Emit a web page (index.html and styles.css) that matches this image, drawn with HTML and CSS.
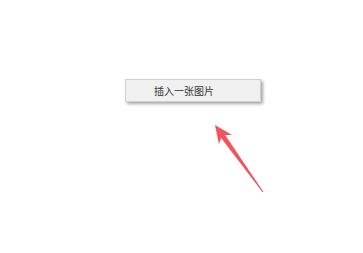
FILE: index.html
```html
<!DOCTYPE html>
<html lang="zh-CN">

<head>
  <meta charset="UTF-8">
  <meta name="viewport" content="width=device-width, initial-scale=1.0">
  <title>插入一张图片</title>
  <link rel="stylesheet" href="styles.css">
</head>

<body>
  <div class="stage">
    <div class="menu-item">插入一张图片</div>
    <!-- hint arrow pointing at the menu item -->
    <svg class="hint-arrow" width="363" height="253" viewBox="0 0 363 253">
      <polygon points="215,125 232,135 225.1,135 263.4,191.7 262.6,192.3 221.1,137.9 219,144.3" fill="#f2545b" />
    </svg>
  </div>
</body>

</html>
```

FILE: styles.css
```css
body {
  margin: 0;
  background: #fff;
  font-family: "Noto Sans CJK SC", "Liberation Sans", sans-serif;
}

.stage {
  position: relative;
  width: 363px;
  height: 253px;
  padding: 79px 0 0 125px;
  box-sizing: border-box;
}

.menu-item {
  width: 136px;
  height: 23px;
  box-sizing: border-box;
  padding-left: 28px;
  background: #f0f0f0;
  border: 1px solid #cfcfcf;
  box-shadow: 2px 2px 3px rgba(0, 0, 0, 0.35);
  font-size: 10px;
  line-height: 21px;
  color: #333;
}

.hint-arrow {
  position: absolute;
  left: 0;
  top: 0;
}
```
